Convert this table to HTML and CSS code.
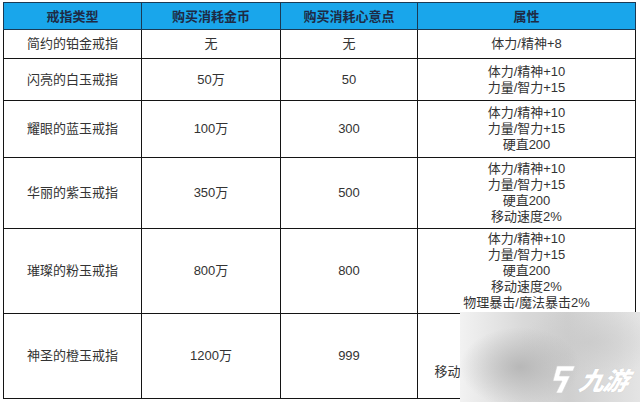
FILE: index.html
```html
<!DOCTYPE html>
<html lang="zh">
<head>
<meta charset="utf-8">
<link rel="stylesheet" href="styles.css">
</head>
<body>
<div class="page">
  <table class="rings">
    <colgroup>
      <col class="c1"><col class="c2"><col class="c3"><col class="c4">
    </colgroup>
    <thead>
      <tr class="h"><th>戒指类型</th><th>购买消耗金币</th><th>购买消耗心意点</th><th>属性</th></tr>
    </thead>
    <tbody>
      <tr class="r1"><td>简约的铂金戒指</td><td>无</td><td>无</td><td>体力/精神+8</td></tr>
      <tr class="r2"><td>闪亮的白玉戒指</td><td>50万</td><td>50</td><td>体力/精神+10<br>力量/智力+15</td></tr>
      <tr class="r3"><td>耀眼的蓝玉戒指</td><td>100万</td><td>300</td><td>体力/精神+10<br>力量/智力+15<br>硬直200</td></tr>
      <tr class="r4"><td>华丽的紫玉戒指</td><td>350万</td><td>500</td><td>体力/精神+10<br>力量/智力+15<br>硬直200<br>移动速度2%</td></tr>
      <tr class="r5"><td>璀璨的粉玉戒指</td><td>800万</td><td>800</td><td>体力/精神+10<br>力量/智力+15<br>硬直200<br>移动速度2%<br>物理暴击/魔法暴击2%</td></tr>
      <tr class="r6"><td>神圣的橙玉戒指</td><td>1200万</td><td>999</td><td>体力/精神+10<br>力量/智力+15<br>硬直200<br>移动速度2%，物理/魔法暴击2%<br>全属性+10</td></tr>
    </tbody>
  </table>
  <div class="watermark">
    <div class="logo">
      <svg class="logo-icon" viewBox="0 0 30 30" width="30" height="30">
        <path d="M9 2 L27 2 L25 7 L13 7 L11.5 12 L22 12 L14 29 L8 29 L14 17 L5 17 Z" fill="#ffffff" stroke="#d0d0d0" stroke-width="0.6"/>
      </svg>
      <span class="logo-text">九游</span>
    </div>
  </div>
</div>
</body>
</html>
```

FILE: styles.css
```css
html, body {
  margin: 0;
  padding: 0;
  background: #ffffff;
}
.page {
  position: relative;
  width: 640px;
  height: 402px;
  overflow: hidden;
  padding: 2px 0 0 3px;
  box-sizing: border-box;
  font-family: "Liberation Sans", "Noto Sans CJK SC", sans-serif;
}
.rings {
  border-collapse: collapse;
  table-layout: fixed;
  width: 632px;
  color: #333333;
  font-size: 13px;
}
.c1 { width: 138px; }
.c2 { width: 139px; }
.c3 { width: 137px; }
.c4 { width: 218px; }
.rings th, .rings td {
  border: 1px solid #141414;
  text-align: center;
  vertical-align: middle;
  padding: 0;
  line-height: 16px;
  white-space: nowrap;
  overflow: hidden;
}
.rings th {
  background: #19a6eb;
  color: #1e2b45;
  font-weight: bold;
  font-size: 13px;
  padding-top: 2px;
  border-color: #1a3a55;
}
.h { height: 27px; }
.r1 { height: 29px; }
.r2 { height: 42px; }
.r3 { height: 57px; }
.r4 { height: 71px; }
.r5 { height: 85px; }
.r6 { height: 85px; }
.watermark {
  position: absolute;
  left: 460px;
  top: 312px;
  width: 180px;
  height: 90px;
  background:
    radial-gradient(ellipse 60px 40px at 60px 55px, rgba(175,175,175,0.8), rgba(175,175,175,0) 100%),
    radial-gradient(ellipse 70px 35px at 130px 30px, rgba(200,200,200,0.7), rgba(200,200,200,0) 100%),
    linear-gradient(90deg, #f2f2f2 0%, #d9d9d9 35%, #cfcfcf 60%, #e4e4e4 100%);
}
.logo {
  position: absolute;
  left: 88px;
  top: 52px;
  display: flex;
  align-items: center;
  gap: 2px;
}
.logo-icon {
  display: block;
}
.logo-text {
  color: #ffffff;
  font-family: "Noto Sans CJK SC", sans-serif;
  font-weight: 900;
  font-style: italic;
  font-size: 25px;
  line-height: 30px;
  letter-spacing: -1px;
  transform: skewX(-12deg);
  text-shadow: 0 0 1px #c0c0c0;
}
```
